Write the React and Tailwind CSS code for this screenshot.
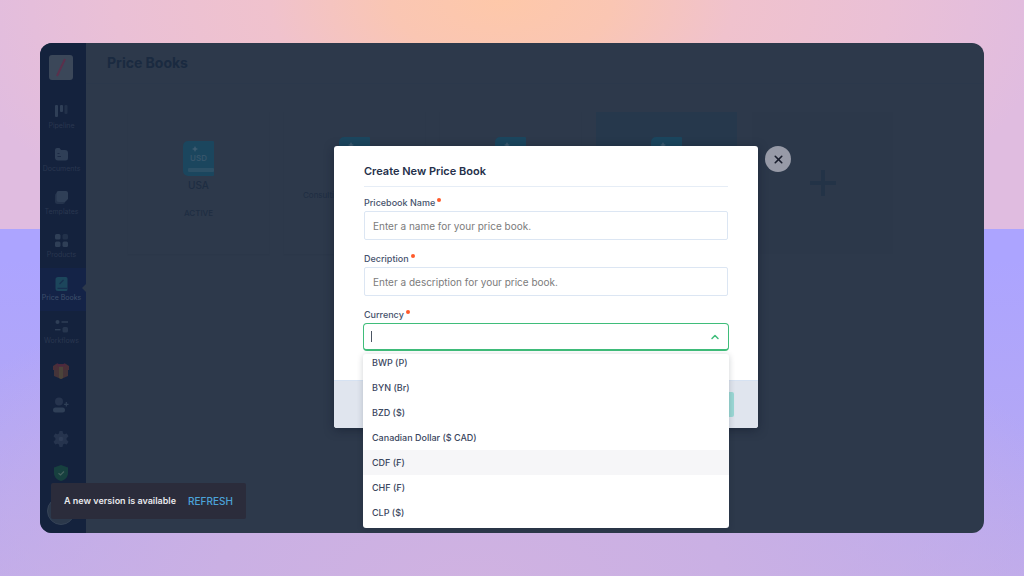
import React, { useState } from 'react';
import { ChevronUp, X } from 'lucide-react';

const CURRENCIES = [
    'BWP (P)',
    'BYN (Br)',
    'BZD ($)',
    'Canadian Dollar ($ CAD)',
    'CDF (₣)',
    'CHF (₣)',
    'CLP ($)'
];

const icons = {
    pipeline: (
        <>
            <rect x="1" y="1" width="3" height="12" rx="1" />
            <rect x="6" y="1" width="3" height="7" rx="1" />
            <rect x="10.5" y="1" width="3" height="9" rx="1" opacity="0.5" />
        </>
    ),
    documents: (
        <>
            <path d="M1 3a2 2 0 0 1 2-2h2.500l1.500 2H11a3 3 0 0 1 3 3v5a2.500 2.500 0 0 1-2.500 2.500H4A3 3 0 0 1 1 10.500z" />
            <path d="M3.500 6.500h2M3.500 9.500h3.500" stroke="#1c2a45" strokeWidth="1" />
        </>
    ),
    templates: (
        <>
            <rect x="1" y="3" width="10" height="11" rx="2.5" opacity="0.6" />
            <path d="M4.500 1H12a2 2 0 0 1 2 2v6l-3 3H4.500a2 2 0 0 1-2-2V3a2 2 0 0 1 2-2z" />
        </>
    ),
    products: (
        <>
            <rect x="1" y="1" width="5.5" height="5.500" rx="1.500" />
            <rect x="8.500" y="1" width="5.500" height="5.500" rx="1.500" opacity="0.5" />
            <rect x="1" y="8.500" width="5.500" height="5.500" rx="1.500" />
            <rect x="8.500" y="8.500" width="5.500" height="5.500" rx="1.500" />
        </>
    ),
    pricebooks: (
        <>
            <path d="M4 1h8a1.500 1.500 0 0 1 1.500 1.500v11A1.500 1.500 0 0 1 12 15H4a2.500 2.500 0 0 1-2.500-2.500v-9A2.500 2.500 0 0 1 4 1z" fill="#1c465c" />
            <path d="M3.500 12.300h10M5.500 8l4-4" stroke="#17304f" strokeWidth="1.200" />
        </>
    ),
    workflows: (
        <>
            <circle cx="3.500" cy="3" r="2" />
            <rect x="7.500" y="2.300" width="6.500" height="1.400" />
            <rect x="1" y="10" width="5.500" height="1.400" />
            <rect x="8.500" y="8" width="5.500" height="5.500" rx="1.500" opacity="0.7" />
        </>
    )
};

const navItems = [
    { id: 'pipeline', label: 'Pipeline' },
    { id: 'documents', label: 'Documents' },
    { id: 'templates', label: 'Templates' },
    { id: 'products', label: 'Products' },
    { id: 'pricebooks', label: 'Price Books' },
    { id: 'workflows', label: 'Workflows' }
];

const Sidebar = () => (
    <aside className="w-[46px] shrink-0 flex flex-col bg-[#14223d] pt-3">
        <a href="#home" aria-label="Home" className="ml-[9px] w-6 h-[25px] rounded-[3px] bg-[#3b4759]">
            <svg viewBox="0 0 24 25" className="w-6 h-[25px]">
                <path d="M8 21L16 4" stroke="#5b304c" strokeWidth="2" />
            </svg>
        </a>

        <nav className="w-full mt-4">
            {navItems.map(({ id, label }) => {
                const active = id === 'pricebooks';
                return (
                    <a
                        key={id}
                        href={`#${id}`}
                        className={`relative h-[43px] pr-[3px] flex flex-col items-center justify-center gap-px text-[7px] leading-[12px] whitespace-nowrap ${active
                            ? 'bg-[#142347] text-[#3f506b]'
                            : 'text-[#2a3750]'
                            }`}
                    >
                        <svg viewBox="0 0 15 15" className="w-[15px] h-[15px]" fill="#2f3f57">
                            {icons[id]}
                        </svg>
                        {label}
                        {active && (
                            <svg viewBox="0 0 4 8" className="absolute right-0 top-4 w-1 h-2" fill="#2d394b">
                                <path d="M4 0v8L0 4z" />
                            </svg>
                        )}
                    </a>
                );
            })}
        </nav>

        <div className="flex flex-col items-center pr-1">
            <button aria-label="What's new" className="h-[34px] flex items-center">
                <svg viewBox="0 0 16 16" className="w-4 h-4">
                    <path d="M1 4h14v9l-7 3-7-3z" fill="#453439" />
                    <path d="M0 3l3-2h10l3 2v4H0z" fill="#4a2f38" />
                    <path d="M6 3.500h4V15l-2 1-2-1z" fill="#4b443a" />
                    <path d="M3.500 0L8 2 12.500 0 11 3.500H5z" fill="#4f2840" />
                </svg>
            </button>
            <button aria-label="Invite user" className="h-[34px] flex items-center">
                <svg viewBox="0 0 16 16" className="w-4 h-4" fill="#26344e">
                    <circle cx="6" cy="4.500" r="4" />
                    <rect x="0" y="10.500" width="12" height="5" rx="2.500" fill="#2f3f57" />
                    <path d="M12.700 5h1.200v1.700h1.600v1.200h-1.600v1.700h-1.200V7.900h-1.600V6.700h1.600z" fill="#2f3f57" />
                </svg>
            </button>
            <button aria-label="Settings" className="h-[34px] flex items-center">
                <svg viewBox="0 0 16 16" className="w-4 h-4" fill="#26344e">
                    <path d="M6.500 0h3l.6 2.500 1.200.7L13.800 2.500l1.700 2.800-1.900 1.900v1.600l1.900 1.900-1.700 2.800-2.500-.7-1.200.7-.6 2.500h-3l-.6-2.500-1.200-.7-2.500.7L.5 10.700l1.900-1.900V7.200L.5 5.300l1.700-2.800 2.500.7 1.200-.7z" />
                    <circle cx="8" cy="8" r="2.300" fill="#2f3d57" />
                </svg>
            </button>
            <button aria-label="Status" className="h-[34px] flex items-center">
                <svg viewBox="0 0 16 16" className="w-4 h-4">
                    <path d="M8 0l7 2.500V8c0 4-3 7-7 8-4-1-7-4-7-8V2.500z" fill="#17403f" />
                    <path d="M5.500 8.200l2 1.800 3.500-3.500" fill="none" stroke="#46625f" strokeWidth="1.200" />
                </svg>
            </button>
            <button aria-label="Account" className="mt-[7px] size-7 rounded-full bg-[#2b384b] border border-[#364357]" />
        </div>
    </aside>
);

const BookIcon = () => (
    <svg viewBox="0 0 31 35" className="w-[31px] h-[35px] shrink-0">
        <path d="M5 0h25a1 1 0 0 1 1 1v30H7v4H5a5 5 0 0 1-5-5V5a5 5 0 0 1 5-5z" fill="#1b465e" />
        <path d="M5 31h26v3a1 1 0 0 1-1 1H5z" fill="#1b465e" />
        <rect x="5" y="27" width="26" height="4" rx="1" fill="#2c5066" />
        <path d="M12 5l1 2 2 1-2 1-1 2-1-2-2-1 2-1z" fill="#3d5b70" />
        <text x="15.500" y="20" textAnchor="middle" fontSize="8" fontWeight="600" fill="#36556b">USD</text>
    </svg>
);

const PriceBookGrid = () => (
    <section className="flex gap-[15px] pl-[42px] pt-7">
        <article className="w-[141px] h-[142px] shrink-0 flex flex-col items-center pt-[29px] shadow-[0_1px_1px_#2b3749] text-[#1e2d42]">
            <BookIcon />
            <h2 className="text-[10px] leading-4 font-medium mt-px">USA</h2>
            <p className="text-[8px] leading-4 font-medium mt-3">ACTIVE</p>
        </article>
        <article className="w-[141px] h-[142px] shrink-0 flex flex-col items-center pt-[25px] shadow-[0_1px_1px_#2b3749] text-[#1e2d42]">
            <BookIcon />
            <h2 className="self-start pl-[19px] text-[8px] leading-4 mt-[15px]">Consulting</h2>
        </article>
        <article className="w-[141px] h-[142px] shrink-0 flex flex-col items-center pt-[25px] shadow-[0_1px_1px_#2b3749]">
            <BookIcon />
        </article>
        <article className="w-[141px] h-[142px] shrink-0 flex flex-col items-center pt-[25px] bg-[#26384c]">
            <BookIcon />
        </article>
        <button aria-label="Add price book" className="w-[141px] h-[142px] shrink-0 flex items-center justify-center bg-[#2c384a]">
            <svg viewBox="0 0 28 28" className="size-7" fill="#233347">
                <path d="M12 1h4v11h11v4H16v11h-4V16H1v-4h11z" />
            </svg>
        </button>
    </section>
);

const FieldLabel = ({ htmlFor, children }) => (
    <label htmlFor={htmlFor} className="flex gap-0.5 text-[9px] leading-4 font-medium text-[#46526c]">
        {children}
        <svg viewBox="0 0 4 4" className="size-1 mt-[3px]" fill="#ff5a2b" aria-hidden="true">
            <circle cx="2" cy="2" r="2" />
        </svg>
    </label>
);

const inputClass = 'block w-full h-[29px] rounded-[2px] border border-[#dce6f3] px-2 text-[10px] text-[#2f3b52] placeholder:text-[#7b7b7b] outline-none';

const CreatePriceBookModal = () => {
    const [name, setName] = useState('');
    const [description, setDescription] = useState('');
    const [currency, setCurrency] = useState('');

    return (
        <div role="dialog" aria-labelledby="modal-title" className="relative w-[424px] rounded-[3px] bg-white shadow-[0_2px_10px_rgba(15,23,42,0.5)]">
            <button aria-label="Close" className="absolute left-full top-0 ml-[7px] size-[26px] rounded-full bg-[#979aa7] flex items-center justify-center text-[#171c2b]">
                <X size={13} strokeWidth={3} />
            </button>

            <form>
                <div className="px-[30px] pt-[17px] pb-[29px]">
                    <h2 id="modal-title" className="pb-[7px] border-b border-[#e6edf6] text-[11px] leading-4 font-semibold text-[#25304a]">
                        Create New Price Book
                    </h2>

                    <div className="mt-2 flex flex-col gap-[11px]">
                        <div>
                            <FieldLabel htmlFor="pb-name">Pricebook Name</FieldLabel>
                            <input
                                id="pb-name"
                                type="text"
                                value={name}
                                onChange={(e) => setName(e.target.value)}
                                placeholder="Enter a name for your price book."
                                className={inputClass}
                            />
                        </div>
                        <div>
                            <FieldLabel htmlFor="pb-description">Decription</FieldLabel>
                            <input
                                id="pb-description"
                                type="text"
                                value={description}
                                onChange={(e) => setDescription(e.target.value)}
                                placeholder="Enter a description for your price book."
                                className={inputClass}
                            />
                        </div>
                        <div>
                            <FieldLabel htmlFor="pb-currency">Currency</FieldLabel>
                            <div className="relative -mx-px h-7 flex items-center rounded-[4px] border border-b-2 border-[#3fbd7a] px-[7px]">
                                {!currency && <span className="w-px h-[11px] bg-[#4b5563]" />}
                                <input
                                    id="pb-currency"
                                    type="text"
                                    role="combobox"
                                    aria-expanded="true"
                                    aria-controls="currency-list"
                                    value={currency}
                                    onChange={(e) => setCurrency(e.target.value)}
                                    className="flex-1 min-w-0 text-[10px] text-[#2f3b52] outline-none"
                                />
                                <ChevronUp size={12} strokeWidth={3} className="text-[#3fbd7a]" />

                                {/* Options menu, scrolled part way down */}
                                <div className="absolute -inset-x-px top-full mt-[5px] z-10 overflow-hidden rounded-[3px] bg-white pb-[3px] shadow-[0_1px_6px_rgba(15,23,42,0.2)]">
                                    <ul id="currency-list" role="listbox" aria-label="Currency" className="-mt-1">
                                        {CURRENCIES.map((item) => (
                                            <li
                                                key={item}
                                                role="option"
                                                aria-selected={item === currency}
                                                onClick={() => setCurrency(item)}
                                                className={`h-[25px] px-[9px] text-[9px] leading-[25px] font-medium text-[#3a465e] ${item === 'CDF (₣)' ? 'bg-[#f6f6f8]' : ''}`}
                                            >
                                                {item}
                                            </li>
                                        ))}
                                    </ul>
                                </div>
                            </div>
                        </div>
                    </div>
                </div>

                <div className="h-12 flex items-center justify-end rounded-b-[3px] border-t border-[#d6e2f2] bg-[#e0e5ee] pr-6">
                    <button type="submit" aria-label="Create" className="w-16 h-[25px] rounded-[2px] bg-[#9bd8d5]" />
                </div>
            </form>
        </div>
    );
};

const Toast = () => (
    <div role="status" className="absolute left-[11px] bottom-[14px] h-9 flex items-center gap-3 rounded-[2px] bg-[#2b2c3b] px-[13px] text-[9px] font-semibold text-[#e8e8ec] whitespace-nowrap">
        <span>A new version is available</span>
        <button className="text-[10px] font-medium text-[#4ba3d9]">REFRESH</button>
    </div>
);

export default function App() {
    return (
        <div className="relative min-h-screen flex flex-col px-10 py-[43px] font-['Inter',sans-serif] bg-[radial-gradient(ellipse_62%_58%_at_46%_102%,#d0b2e1_0%,#cab0e4_40%,transparent_100%),linear-gradient(to_bottom,#aca4ff_45%,#b3a7f6_75%,#beabec_100%)]">
            <div className="absolute inset-x-0 top-0 h-[229px] bg-[radial-gradient(ellipse_54%_130%_at_49%_0%,#fec8a9_0%,#fac6b3_20%,#f0c2cd_42%,#eac0d6_70%,#e0bce0_100%)]" />

            <div className="relative flex-1 flex overflow-hidden rounded-xl bg-[#2d394b]">
                <Sidebar />
                <main className="flex-1 min-w-0">
                    <header className="h-[41px] flex items-center px-[21px] border-b border-[#2b384b]">
                        <h1 className="text-[14px] leading-5 font-bold text-[#1a2a40]">Price Books</h1>
                    </header>
                    <PriceBookGrid />
                </main>

                <div className="absolute inset-0 flex items-start justify-center pl-[68px] pt-[103px]">
                    <CreatePriceBookModal />
                </div>
                <Toast />
            </div>
        </div>
    );
}
